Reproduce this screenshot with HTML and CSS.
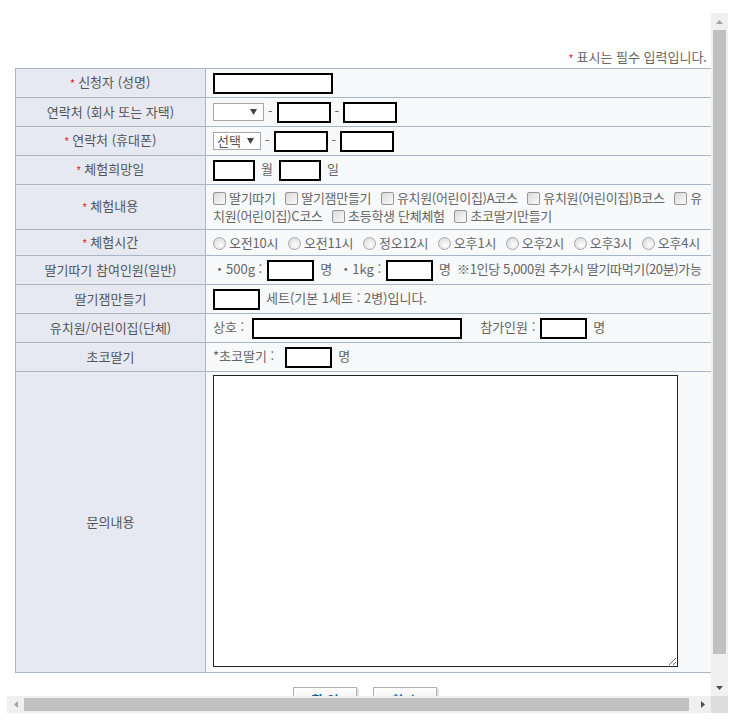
FILE: index.html
```html
<!DOCTYPE html>
<html lang="ko">
<head>
  <meta charset="UTF-8">
  <meta name="viewport" content="width=device-width, initial-scale=1.0">
  <title>체험 신청</title>
  <link rel="stylesheet" href="styles.css">
</head>
<body>
<div class="frame">
  <div class="view">
    <div class="page">
      <p class="note"><span class="req">*</span> 표시는 필수 입력입니다.</p>
      <table class="form">
        <colgroup><col class="c-label"><col></colgroup>
        <tr>
          <th><span class="req">*</span> 신청자 (성명)</th>
          <td><input type="text" class="txt w-name"></td>
        </tr>
        <tr>
          <th>연락처 (회사 또는 자택)</th>
          <td><select class="sel w-tel"><option></option></select><span class="dash">-</span><input type="text" class="txt w-num"><span class="dash">-</span><input type="text" class="txt w-num"></td>
        </tr>
        <tr>
          <th><span class="req">*</span> 연락처 (휴대폰)</th>
          <td><select class="sel w-hp"><option>선택</option></select><span class="dash">-</span><input type="text" class="txt w-num"><span class="dash">-</span><input type="text" class="txt w-num"></td>
        </tr>
        <tr>
          <th><span class="req">*</span> 체험희망일</th>
          <td><input type="text" class="txt w-day"><span class="unit">월</span><input type="text" class="txt w-day"><span class="unit">일</span></td>
        </tr>
        <tr class="r-two">
          <th><span class="req">*</span> 체험내용</th>
          <td class="opts checks">
            <label><input type="checkbox" class="chk">딸기따기</label>
            <label><input type="checkbox" class="chk">딸기잼만들기</label>
            <label><input type="checkbox" class="chk">유치원(어린이집)A코스</label>
            <label><input type="checkbox" class="chk">유치원(어린이집)B코스</label>
            <label><input type="checkbox" class="chk">유치원(어린이집)C코스</label>
            <label><input type="checkbox" class="chk">초등학생 단체체험</label>
            <label><input type="checkbox" class="chk">초코딸기만들기</label>
          </td>
        </tr>
        <tr class="r-low">
          <th><span class="req">*</span> 체험시간</th>
          <td class="opts radios">
            <label><input type="radio" name="time" class="rad">오전10시</label>
            <label><input type="radio" name="time" class="rad">오전11시</label>
            <label><input type="radio" name="time" class="rad">정오12시</label>
            <label><input type="radio" name="time" class="rad">오후1시</label>
            <label><input type="radio" name="time" class="rad">오후2시</label>
            <label><input type="radio" name="time" class="rad">오후3시</label>
            <label><input type="radio" name="time" class="rad">오후4시</label>
          </td>
        </tr>
        <tr>
          <th>딸기따기 참여인원(일반)</th>
          <td>・500g :<input type="text" class="txt w-cnt gap"><span class="unit">명</span><span class="item">・1kg :</span><input type="text" class="txt w-cnt gap"><span class="unit">명</span><span class="small">※1인당 5,000원 추가시 딸기따먹기(20분)가능</span></td>
        </tr>
        <tr>
          <th>딸기잼만들기</th>
          <td><input type="text" class="txt w-cnt"><span class="unit">세트(기본 1세트 : 2병)입니다.</span></td>
        </tr>
        <tr>
          <th>유치원/어린이집(단체)</th>
          <td>상호 :<input type="text" class="txt w-corp gap-m"><span class="item wide">참가인원 :</span><input type="text" class="txt w-cnt gap"><span class="unit">명</span></td>
        </tr>
        <tr>
          <th>초코딸기</th>
          <td>*초코딸기 :<input type="text" class="txt w-cnt gap-l"><span class="unit">명</span></td>
        </tr>
        <tr>
          <th>문의내용</th>
          <td class="memo"><textarea class="area"></textarea></td>
        </tr>
      </table>
      <div class="buttons"><button type="button" class="btn">확 인</button><button type="button" class="btn">취 소</button></div>
    </div>
  </div>
  <div class="vbar">
    <span class="arrow up"></span>
    <div class="track"><div class="thumb"></div></div>
    <span class="arrow down"></span>
  </div>
  <div class="hbar">
    <span class="arrow left"></span>
    <div class="track"><div class="thumb"></div></div>
    <span class="arrow right"></span>
  </div>
  <div class="corner"></div>
</div>
</body>
</html>
```

FILE: styles.css
```css
body {
  margin: 0;
  background: #fff;
  font-family: "Noto Sans CJK KR", "Noto Sans", sans-serif;
  font-size: 13px;
  color: #666;
}

/* popup frame with its scrollbars */
.frame {
  display: grid;
  grid-template-columns: 704px 17px;
  grid-template-rows: 683px 17px;
  width: 721px;
  margin: 13px 0 0 7px;
}

.view {
  overflow: hidden;
}

.vbar,
.hbar {
  display: flex;
  background: #f0f0f0;
}

.vbar {
  flex-direction: column;
}

.arrow {
  flex: 0 0 17px;
  background-repeat: no-repeat;
  background-position: center;
}

.arrow.up {
  background-image: url("data:image/svg+xml,%3Csvg xmlns='http://www.w3.org/2000/svg' width='7' height='4'%3E%3Cpath d='M3.5 0L7 4H0z' fill='%23a3a3a3'/%3E%3C/svg%3E");
}

.arrow.down {
  background-image: url("data:image/svg+xml,%3Csvg xmlns='http://www.w3.org/2000/svg' width='7' height='4'%3E%3Cpath d='M0 0H7L3.5 4z' fill='%23505050'/%3E%3C/svg%3E");
}

.arrow.left {
  background-image: url("data:image/svg+xml,%3Csvg xmlns='http://www.w3.org/2000/svg' width='4' height='7'%3E%3Cpath d='M0 3.5L4 0V7z' fill='%23a3a3a3'/%3E%3C/svg%3E");
}

.arrow.right {
  background-image: url("data:image/svg+xml,%3Csvg xmlns='http://www.w3.org/2000/svg' width='4' height='7'%3E%3Cpath d='M0 0L4 3.5L0 7z' fill='%23505050'/%3E%3C/svg%3E");
}

.track {
  flex: 1;
}

.vbar .track {
  padding: 0 2px;
}

.hbar .track {
  padding: 2px 0;
}

.thumb {
  background: #c1c1c1;
}

.vbar .thumb {
  height: 624px;
}

.hbar .thumb {
  width: 665px;
  height: 100%;
}

.corner {
  background: #dcdcdc;
}

/* form */
.page {
  width: 708px;
  padding-top: 35px;
}

.note {
  margin: 0 8px 0 0;
  text-align: right;
  line-height: 18px;
}

.req {
  color: #e60012;
  font-family: "Liberation Sans", sans-serif;
  font-size: 10px;
}

.form {
  width: 700px;
  margin-left: 8px;
  border-collapse: collapse;
  table-layout: fixed;
}

.form col.c-label {
  width: 190px;
}

.form th,
.form td {
  height: 28px;
  padding: 0 8px;
  border: 1px solid #a9b6c8;
  line-height: 18px;
}

.form .r-two th,
.form .r-two td {
  height: 44px;
}

.form .r-low th,
.form .r-low td {
  height: 25px;
}

.form th {
  background: #e6e9f1;
  color: #555;
  font-weight: normal;
  text-align: center;
}

.form td {
  padding-left: 7px;
  background: #f8f9fb;
  text-align: left;
}

.txt {
  box-sizing: border-box;
  height: 21px;
  padding: 0 2px;
  border: 2px solid #000;
  background: #fff;
  font: inherit;
  vertical-align: middle;
}

.w-name { width: 120px; }
.w-num { width: 54px; }
.w-day { width: 42px; }
.w-cnt { width: 47px; }
.w-corp { width: 210px; }

.gap { margin-left: 5px; }
.gap-m { margin-left: 8px; }
.gap-l { margin-left: 11px; }

.sel {
  box-sizing: border-box;
  height: 18px;
  padding: 0 14px 0 3px;
  border: 1px solid #a6a6a6;
  border-radius: 0;
  appearance: none;
  background: #fff url("data:image/svg+xml,%3Csvg xmlns='http://www.w3.org/2000/svg' width='7' height='6'%3E%3Cpath d='M0 0H7L3.5 6z' fill='%23444'/%3E%3C/svg%3E") no-repeat right 6px center;
  font: inherit;
  line-height: 16px;
  color: #555;
  vertical-align: middle;
}

.w-tel { width: 51px; }
.w-hp { width: 48px; }

.dash {
  margin: 0 4px;
}

.unit {
  margin: 0 6px;
}

.item {
  margin-left: 1px;
}

.item.wide {
  margin-left: 18px;
}

.small {
  letter-spacing: -0.35px;
}

.checks label {
  letter-spacing: -0.3px;
}

.radios label {
  letter-spacing: -0.2px;
}

.chk,
.rad {
  appearance: none;
  box-sizing: border-box;
  width: 13px;
  height: 13px;
  margin: 0 3px 0 6px;
  vertical-align: -2px;
}

.opts label:first-child .chk,
.opts label:first-child .rad {
  margin-left: 0;
}

.chk {
  border: 1px solid #969696;
  border-radius: 2px;
  background: linear-gradient(135deg, #d9d9d9, #fbfbfb);
}

.rad {
  border: 1px solid #a8a8a8;
  border-radius: 50%;
  background: radial-gradient(circle at 60% 65%, #fdfdfd, #d6d6d6);
}

.form .memo {
  height: auto;
  padding: 3px 8px 5px 7px;
}

.area {
  display: block;
  box-sizing: border-box;
  width: 465px;
  height: 292px;
  border: 1px solid #222;
  background: #fff;
}

.buttons {
  margin-top: 14px;
  padding-left: 8px;
  text-align: center;
}

.btn {
  width: 64px;
  height: 24px;
  margin: 0 8px;
  border: 1px solid #b0b0b0;
  background: linear-gradient(#fdfdfd, #ebebeb);
  box-shadow: 2px 2px 0 #e0e0e0;
  font: inherit;
  font-weight: bold;
  color: #1d5f9e;
}
```
